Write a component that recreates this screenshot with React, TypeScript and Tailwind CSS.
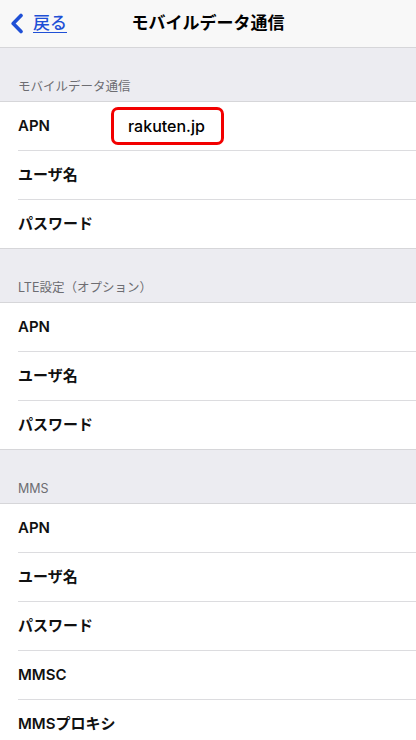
import React from "react";

const font = { fontFamily: '"Inter", "Noto Sans CJK JP", sans-serif' };

type Section = { title: string; rows: string[] };

const sections: Section[] = [
  { title: "モバイルデータ通信", rows: ["APN", "ユーザ名", "パスワード"] },
  { title: "LTE設定（オプション）", rows: ["APN", "ユーザ名", "パスワード"] },
  { title: "MMS", rows: ["APN", "ユーザ名", "パスワード", "MMSC", "MMSプロキシ"] },
];

const Row = ({ label, last, value }: { label: string; last: boolean; value?: string }) => (
  <div className="pl-[18px] bg-white">
    <div className={`flex items-center ${last ? "h-[48px]" : "h-[49px] border-b border-[#dcdcdf]"}`}>
      <span className="min-w-[93px] whitespace-nowrap text-[15px] font-semibold text-[#111]">{label}</span>
      {value && (
        <div className="h-[38px] w-[113px] border-[3px] border-[#f20000] rounded-[7px] flex items-center pl-[14px] text-[16px] font-medium text-black">
          {value}
        </div>
      )}
    </div>
  </div>
);

export default function App() {
  return (
    <div className="w-[416px] h-[740px] overflow-hidden bg-[#ececf1]" style={font}>
      {/* nav */}
      <div className="relative h-[48px] bg-[#f8f8f8] border-b border-[#d6d6d9] flex items-center justify-center">
        <div className="absolute left-[10px] top-0 h-full flex items-center gap-[9px]">
          <svg width="14" height="21" viewBox="0 0 14 21" fill="none">
            <path d="M11 2.5 L3.2 10.5 L11 18.5" stroke="#1f50d6" strokeWidth="3.6" strokeLinecap="round" strokeLinejoin="round" />
          </svg>
          <span className="text-[17px] font-medium text-[#1f50d6] underline underline-offset-[3px]">戻る</span>
        </div>
        <span className="text-[17px] font-bold text-black">モバイルデータ通信</span>
      </div>

      {sections.map((s, si) => (
        <div key={si}>
          <div className="h-[54px] border-b border-[#d6d6d9] flex items-end px-[18px] pb-[8px]">
            <span className="text-[12.5px] leading-none text-[#6d6d72]">{s.title}</span>
          </div>
          <div className="border-b border-[#d6d6d9]">
            {s.rows.map((r, ri) => (
              <Row
                key={ri}
                label={r}
                last={ri === s.rows.length - 1}
                value={si === 0 && ri === 0 ? "rakuten.jp" : undefined}
              />
            ))}
          </div>
        </div>
      ))}
    </div>
  );
}
